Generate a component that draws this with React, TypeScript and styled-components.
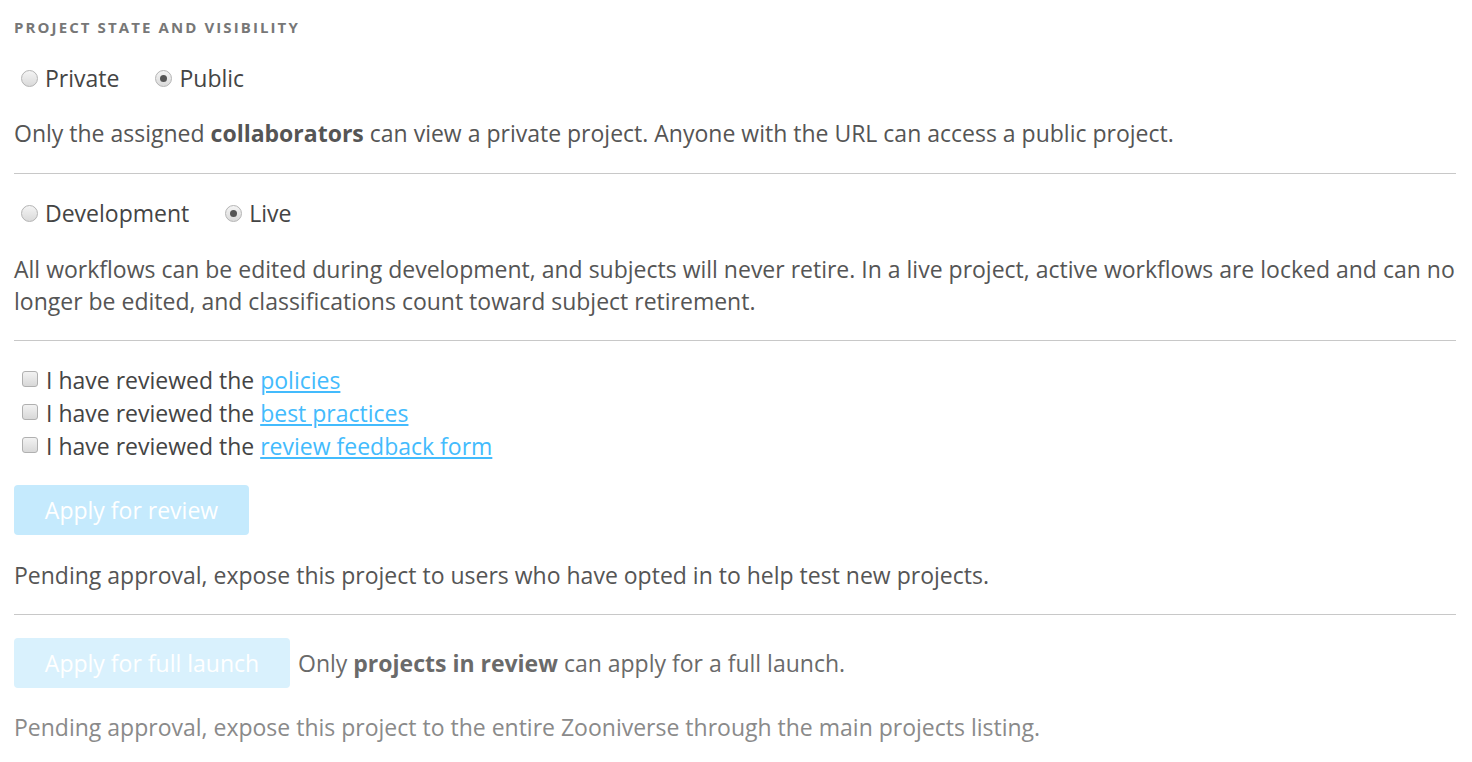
import React from "react";
import styled, { createGlobalStyle } from "styled-components";

const Global = createGlobalStyle`
  html, body { margin: 0; padding: 0; background: #fff; }
  body { font-family: "Open Sans", "DejaVu Sans", sans-serif; color: #555; }
`;

const Page = styled.div`
  padding: 17px 16px 20px 14px;
  font-size: 23px;
`;

const Heading = styled.h3`
  margin: 0;
  font-size: 15px;
  line-height: 20px;
  font-weight: 700;
  letter-spacing: 2.1px;
  text-transform: uppercase;
  color: #777;
`;

const RadioRow = styled.div<{ $top: number }>`
  display: flex;
  align-items: center;
  gap: 36px;
  margin-top: ${(p) => p.$top}px;
  padding-left: 7px;
  line-height: 32px;
`;

const Label = styled.label`
  display: inline-flex;
  align-items: center;
  gap: 7px;
  color: #444;
`;

const RadioDot = styled.span<{ $checked?: boolean }>`
  width: 17px;
  height: 17px;
  box-sizing: border-box;
  border-radius: 50%;
  border: 1px solid #b4b4b4;
  background: linear-gradient(#f4f4f4, #dadada);
  display: inline-flex;
  align-items: center;
  justify-content: center;
  &::after {
    content: "";
    display: ${(p) => (p.$checked ? "block" : "none")};
    width: 7px;
    height: 7px;
    border-radius: 50%;
    background: #555;
  }
`;

const Para = styled.p<{ $top: number; $muted?: boolean }>`
  margin: ${(p) => p.$top}px 0 0;
  line-height: 32px;
  color: ${(p) => (p.$muted ? "#8a8a8a" : "#555")};
  strong { font-weight: 700; }
`;

const Rule = styled.hr<{ $top: number }>`
  margin: ${(p) => p.$top}px 0 0;
  border: 0;
  border-top: 1px solid #c8c8c8;
  height: 0;
`;

const CheckList = styled.div`
  margin-top: 23px;
  padding-left: 8px;
  display: flex;
  flex-direction: column;
`;

const CheckRow = styled.label`
  display: flex;
  align-items: center;
  gap: 8px;
  line-height: 33px;
  color: #444;
`;

const Box = styled.span`
  width: 16px;
  height: 16px;
  box-sizing: border-box;
  border: 1px solid #b0b0b0;
  border-radius: 3px;
  background: linear-gradient(#f2f2f2, #d8d8d8);
  margin-top: -3px;
`;

const Link = styled.a`
  color: #43bbfd;
  text-decoration: underline;
`;

const Button = styled.button<{ $top: number; $bg: string; $width: number }>`
  margin-top: ${(p) => p.$top}px;
  width: ${(p) => p.$width}px;
  height: 50px;
  border: 0;
  border-radius: 4px;
  background: ${(p) => p.$bg};
  color: #fff;
  font-family: inherit;
  font-size: 23px;
  padding: 0;
  flex: none;
`;

const LaunchRow = styled.div`
  display: flex;
  align-items: flex-start;
  gap: 8px;
  margin-top: 23px;
`;

const LaunchNote = styled.span`
  line-height: 50px;
  color: #6a6a6a;
  strong { font-weight: 700; }
`;

export default function App() {
  return (
    <Page>
      <Global />
      <Heading>Project state and visibility</Heading>
      <RadioRow $top={25}>
        <Label>
          <RadioDot />
          Private
        </Label>
        <Label>
          <RadioDot $checked />
          Public
        </Label>
      </RadioRow>
      <Para $top={23}>
        Only the assigned <strong>collaborators</strong> can view a private project. Anyone with the URL can
        access a public project.
      </Para>
      <Rule $top={24} />
      <RadioRow $top={23}>
        <Label>
          <RadioDot />
          Development
        </Label>
        <Label>
          <RadioDot $checked />
          Live
        </Label>
      </RadioRow>
      <Para $top={24}>
        All workflows can be edited during development, and subjects will never retire. In a live project, active
        workflows are locked and can no longer be edited, and classifications count toward subject retirement.
      </Para>
      <Rule $top={23} />
      <CheckList>
        <CheckRow>
          <Box />
          <span>
            I have reviewed the <Link href="#">policies</Link>
          </span>
        </CheckRow>
        <CheckRow>
          <Box />
          <span>
            I have reviewed the <Link href="#">best practices</Link>
          </span>
        </CheckRow>
        <CheckRow>
          <Box />
          <span>
            I have reviewed the <Link href="#">review feedback form</Link>
          </span>
        </CheckRow>
      </CheckList>
      <div>
        <Button $top={22} $bg="#c5eafd" $width={235}>
          Apply for review
        </Button>
      </div>
      <Para $top={24}>
        Pending approval, expose this project to users who have opted in to help test new projects.
      </Para>
      <Rule $top={23} />
      <LaunchRow>
        <Button $top={0} $bg="#d9f1fd" $width={276}>
          Apply for full launch
        </Button>
        <LaunchNote>
          Only <strong>projects in review</strong> can apply for a full launch.
        </LaunchNote>
      </LaunchRow>
      <Para $top={23} $muted>
        Pending approval, expose this project to the entire Zooniverse through the main projects listing.
      </Para>
    </Page>
  );
}
